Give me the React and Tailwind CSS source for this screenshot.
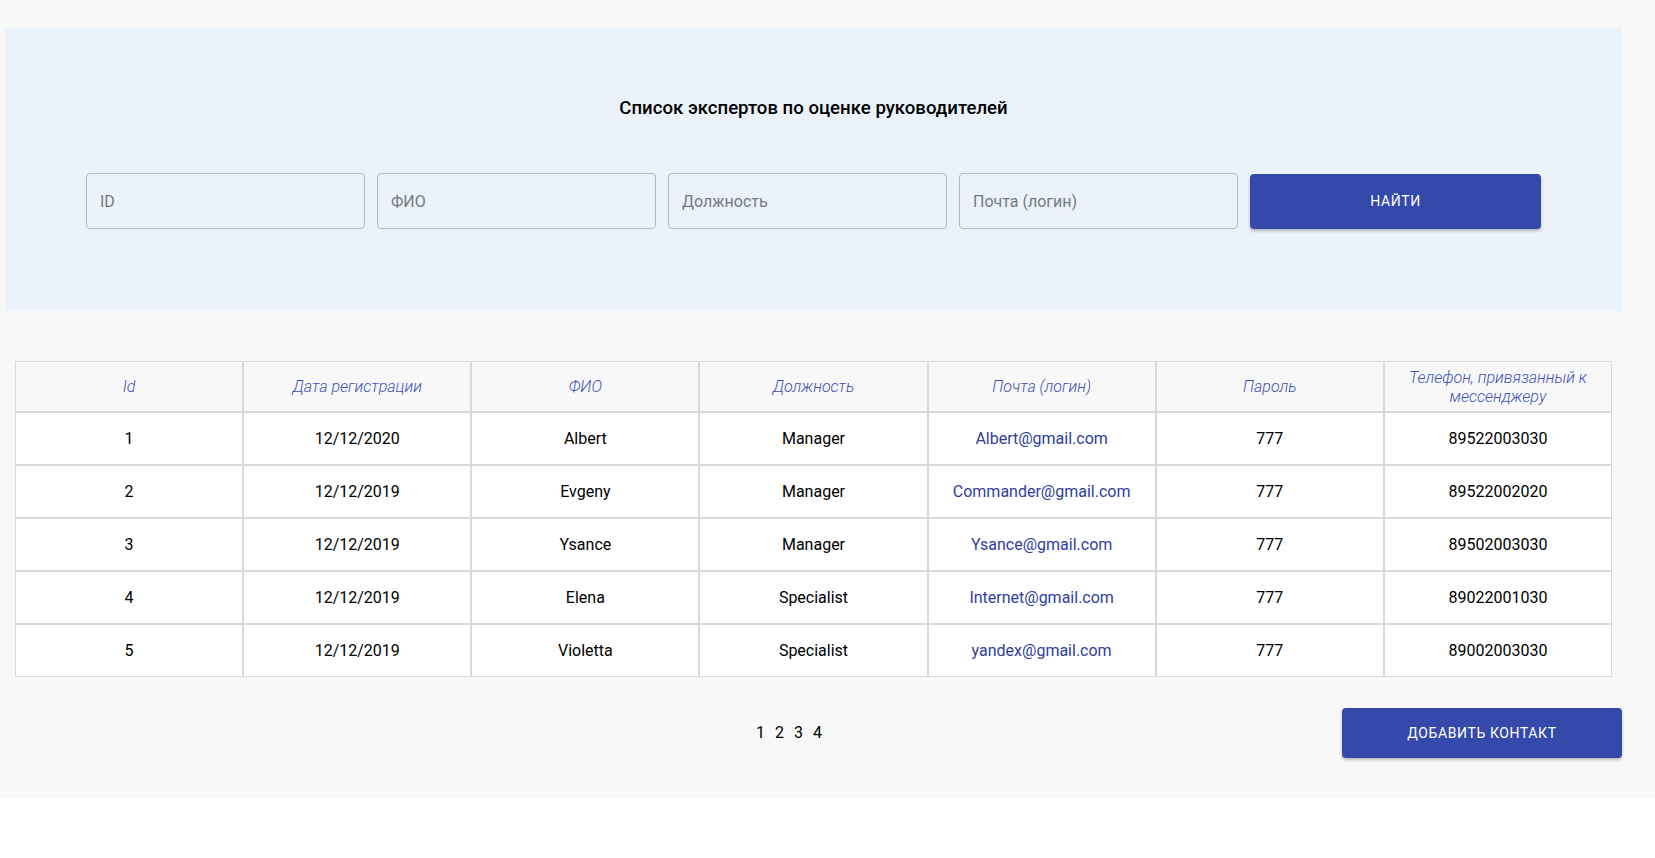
const rows = [
  { id: 1, date: "12/12/2020", name: "Albert", role: "Manager", email: "Albert@gmail.com", pass: "777", phone: "89522003030" },
  { id: 2, date: "12/12/2019", name: "Evgeny", role: "Manager", email: "Commander@gmail.com", pass: "777", phone: "89522002020" },
  { id: 3, date: "12/12/2019", name: "Ysance", role: "Manager", email: "Ysance@gmail.com", pass: "777", phone: "89502003030" },
  { id: 4, date: "12/12/2019", name: "Elena", role: "Specialist", email: "Internet@gmail.com", pass: "777", phone: "89022001030" },
  { id: 5, date: "12/12/2019", name: "Violetta", role: "Specialist", email: "yandex@gmail.com", pass: "777", phone: "89002003030" },
];

const headers = ["Id", "Дата регистрации", "ФИО", "Должность", "Почта (логин)", "Пароль", "Телефон, привязанный к мессенджеру"];

const fields = ["ID", "ФИО", "Должность", "Почта (логин)"];

export default function App() {
  return (
    <div className="bg-[#f8f8f8] pt-[28px] pb-[40px] pl-[5px] pr-[33px] font-['Roboto',sans-serif] text-black">
      <section className="bg-[#ebf2fa] px-[81px] pt-[68px] pb-[82px]">
        <h1 className="text-center text-[18.6px] leading-[24px] font-medium">Список экспертов по оценке руководителей</h1>
        <div className="mt-[53px] flex items-center gap-[12px]">
          {fields.map((f) => (
            <input
              key={f}
              placeholder={f}
              className="h-[56px] w-[279px] rounded-[4px] border border-[#b4bac3] bg-transparent px-[13px] text-[16px] placeholder:text-[#757a80] outline-none"
            />
          ))}
          <button className="h-[55px] flex-1 rounded-[4px] bg-[#3449a9] text-[14px] font-normal tracking-[0.6px] text-white uppercase shadow-[0_2px_3px_rgba(0,0,0,0.25)]">
            Найти
          </button>
        </div>
      </section>

      <div className="mt-[50px] px-[10px]">
        <table className="w-full table-fixed border-separate border-spacing-0 text-[16px]">
          <thead>
            <tr className="h-[51px] bg-[#f8f8f8]">
              {headers.map((h) => (
                <th key={h} className="border border-[#d9d9d9] px-[20px] text-center text-[16px] leading-[19px] font-light italic text-[#3f51b5]">
                  {h}
                </th>
              ))}
            </tr>
          </thead>
          <tbody>
            {rows.map((r) => (
              <tr key={r.id} className="h-[53px] bg-white text-center">
                <td className="border border-[#d9d9d9]">{r.id}</td>
                <td className="border border-[#d9d9d9]">{r.date}</td>
                <td className="border border-[#d9d9d9]">{r.name}</td>
                <td className="border border-[#d9d9d9]">{r.role}</td>
                <td className="border border-[#d9d9d9] text-[#2f3e9e]">{r.email}</td>
                <td className="border border-[#d9d9d9]">{r.pass}</td>
                <td className="border border-[#d9d9d9]">{r.phone}</td>
              </tr>
            ))}
          </tbody>
        </table>
      </div>

      <div className="mt-[31px] flex items-center">
        <div className="ml-[751px] flex gap-[10px] text-[16px]">
          <span>1</span>
          <span>2</span>
          <span>3</span>
          <span>4</span>
        </div>
        <button className="ml-auto h-[50px] w-[280px] rounded-[4px] bg-[#3449a9] text-[14px] font-normal tracking-[0.6px] text-white uppercase shadow-[0_2px_3px_rgba(0,0,0,0.25)]">
          Добавить контакт
        </button>
      </div>
    </div>
  );
}
